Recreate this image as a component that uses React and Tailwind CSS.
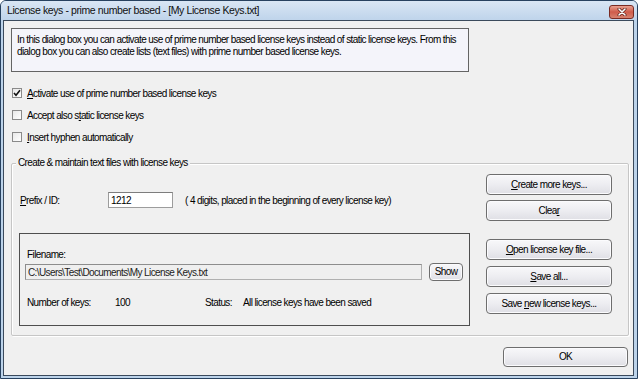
import React from "react";

function Btn({ children, className = "" }) {
  return (
    <button
      type="button"
      className={`flex items-center justify-center rounded-[4px] border border-[#6e6e6e] bg-gradient-to-b from-[#f8f8fa] via-[#ededf1] to-[#dfdfe5] text-[10px] leading-none text-black shadow-[inset_0_0_0_1px_#fbfbfd] ${className}`}
    >
      <span>{children}</span>
    </button>
  );
}

function Check({ checked, children }) {
  return (
    <label className="flex h-[22px] items-center gap-[5px] pl-[8px]">
      <span className="flex h-[10px] w-[10px] items-center justify-center border border-[#8a8a8a] bg-gradient-to-br from-[#e8e8e8] to-white">
        {checked && (
          <svg width="8" height="8" viewBox="0 0 8 8">
            <polyline points="1,4 3,6.2 7,1.2" fill="none" stroke="#111" strokeWidth="1.6" />
          </svg>
        )}
      </span>
      <span>{children}</span>
    </label>
  );
}

export default function App() {
  return (
    <div className="flex h-[379px] w-[638px] flex-col overflow-hidden rounded-t-[6px] border border-[#27415f] bg-[#bcd3ea] font-['Liberation_Sans',Arial,sans-serif] text-[10px] tracking-[-0.6px] text-black">
      {/* title bar */}
      <div className="flex h-[19px] items-center justify-between bg-gradient-to-b from-[#d9e6f4] to-[#bfd4eb] pl-[6px] pr-[3px]">
        <span className="text-[10.5px] tracking-[-0.4px] text-[#101010]">
          License keys - prime number based - [My License Keys.txt]
        </span>
        <span className="mt-[3px] flex h-[14px] w-[25px] items-center justify-center rounded-[3px] border border-[#7a2a22] bg-gradient-to-b from-[#e8a091] via-[#cf5b4a] to-[#d7826f]">
          <svg width="10" height="8" viewBox="0 0 10 8">
            <path d="M2 1 L8 7 M8 1 L2 7" stroke="#5a1d16" strokeWidth="3" strokeLinecap="round" />
            <path d="M2 1 L8 7 M8 1 L2 7" stroke="#fff" strokeWidth="1.6" strokeLinecap="round" />
          </svg>
        </span>
      </div>

      {/* client */}
      <div className="mb-[2px] ml-[2px] mr-[3px] flex flex-1 flex-col border border-[#3b4a5c] bg-[#f0f0f0]">
        <div className="ml-[7px] mt-[7px] h-[44px] w-[458px] whitespace-nowrap border border-[#646464] bg-[#f4f4fa] px-[5px] pt-[5px] leading-[11.5px]">
          In this dialog box you can activate use of prime number based license keys instead of static license keys. From this
          <br />
          dialog box you can also create lists (text files) with prime number based license keys.
        </div>

        <div className="mt-[10px]">
          <Check checked>
            <u>A</u>ctivate use of prime number based license keys
          </Check>
          <Check>
            Accept also s<u>t</u>atic license keys
          </Check>
          <Check>
            <u>I</u>nsert hyphen automatically
          </Check>
        </div>

        {/* group box */}
        <div className="relative ml-[7px] mt-[15px] flex h-[173px] w-[618px] rounded-[2px] border border-[#c6c6c6] shadow-[inset_1px_1px_0_#ffffff,1px_1px_0_#ffffff]">
          <span className="absolute -top-[7px] left-[4px] bg-[#f0f0f0] px-[2px] leading-[12px]">
            Create &amp; maintain text files with license keys
          </span>

          <div className="flex w-[474px] flex-col">
            <div className="mt-[28px] flex h-[16px] items-center pl-[8px]">
              <span className="w-[88px]">
                <u>P</u>refix / ID:
              </span>
              <span className="flex h-[16px] w-[65px] items-center border border-[#9c9c9c] border-t-[#7d7d7d] bg-white pl-[2px]">
                1212
              </span>
              <span className="ml-[12px]">( 4 digits, placed in the beginning of every license key)</span>
            </div>

            <div className="ml-[7px] mt-[25px] flex h-[93px] w-[451px] flex-col border border-[#4f4f4f]">
              <span className="ml-[7px] mt-[15px] leading-[12px]">Filename:</span>
              <div className="mt-[2px] flex items-center">
                <span className="ml-[5px] flex h-[16px] w-[397px] items-center border border-[#b0b0b0] border-l-[#8d8d8d] border-t-[#8d8d8d] bg-[#efefef] pl-[2px] text-[#222]">
                  C:\Users\Test\Documents\My License Keys.txt
                </span>
                <Btn className="ml-[7px] h-[18px] w-[34px] rounded-[3px]">Show</Btn>
              </div>
              <div className="mt-[16px] flex leading-[12px]">
                <span className="ml-[7px] w-[88px]">Number of keys:</span>
                <span className="w-[90px]">100</span>
                <span className="w-[38px]">Status:</span>
                <span>All license keys have been saved</span>
              </div>
            </div>
          </div>

          <div className="flex w-[126px] flex-col pt-[10px]">
            <Btn className="h-[21px]">
              <u>C</u>reate more keys...
            </Btn>
            <Btn className="mt-[5px] h-[21px]">
              Clea<u>r</u>
            </Btn>
            <Btn className="mt-[18px] h-[21px]">
              <u>O</u>pen license key file...
            </Btn>
            <Btn className="mt-[6px] h-[21px]">
              <u>S</u>ave all...
            </Btn>
            <Btn className="mt-[6px] h-[21px]">
              Save <u>n</u>ew license keys...
            </Btn>
          </div>
        </div>

        <Btn className="ml-[499px] mt-[11px] h-[20px] w-[125px]">OK</Btn>
      </div>
    </div>
  );
}
